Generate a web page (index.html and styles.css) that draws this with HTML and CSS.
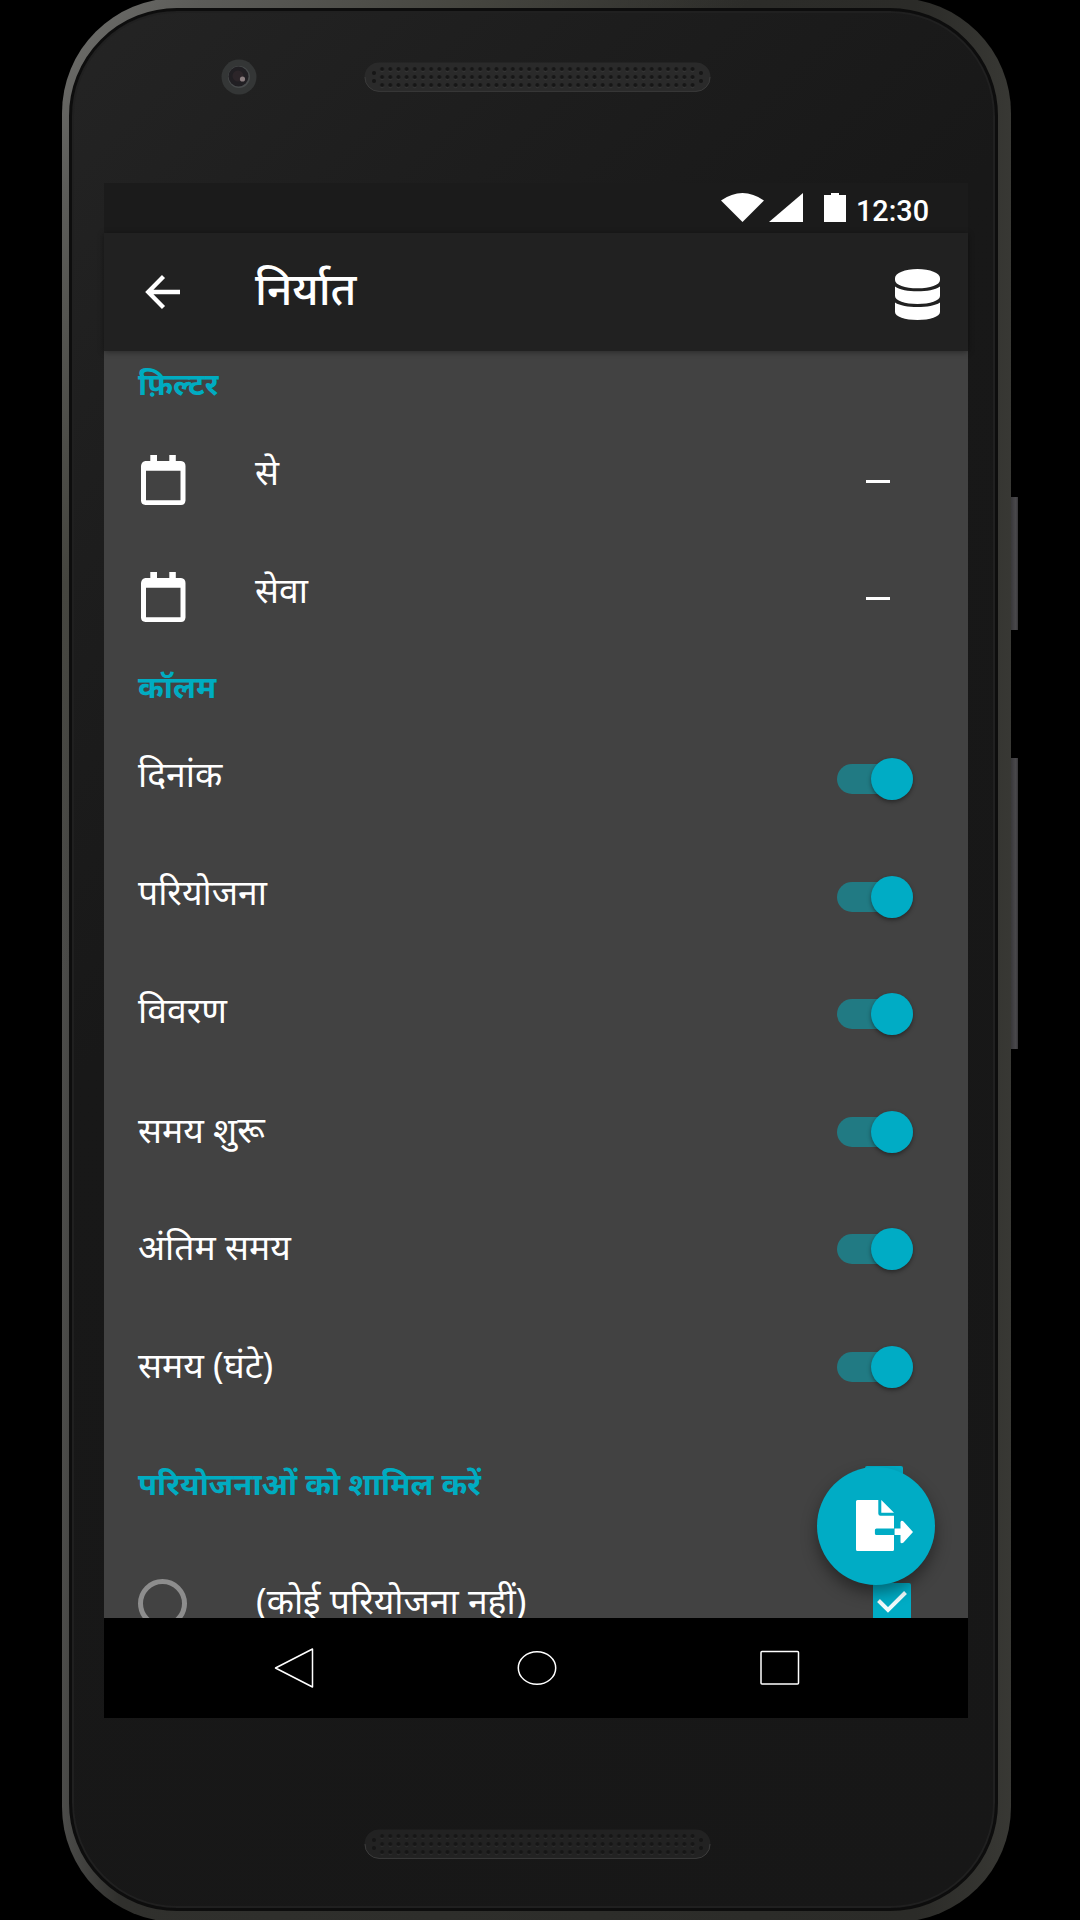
FILE: index.html
```html
<!DOCTYPE html>
<html lang="hi">
<head>
<meta charset="utf-8">
<title>निर्यात</title>
<link rel="stylesheet" href="styles.css">
</head>
<body>
<div class="phone">
  <span class="side-button power"></span>
  <span class="side-button volume"></span>
  <div class="bezel">
    <div class="forehead">
      <svg class="camera" viewBox="0 0 36 36"><circle cx="18" cy="18" r="17.5" fill="#343636"/><circle cx="18" cy="18" r="11" fill="#484b4c"/><circle cx="17.5" cy="17.5" r="10" fill="#211f23"/><circle cx="17" cy="17" r="5.5" fill="#2c2529"/><circle cx="21.5" cy="20" r="2.6" fill="#8b7e80"/></svg>
      <svg class="speaker" viewBox="0 0 347 30">
        <defs><pattern id="holes" x="14" y="3" width="8.17" height="8" patternUnits="userSpaceOnUse"><circle cx="4.1" cy="4" r="2" fill="#161616"/><path d="M2.6 6.2q1.5.8 3 0" stroke="#383838" fill="none" stroke-width=".8"/></pattern></defs>
        <rect x=".5" y=".5" width="346" height="29" rx="14.5" fill="#2a2a2a"/>
        <path d="M1 15A14 14 0 0 0 15 29.400H332A14 14 0 0 0 346 15" fill="none" stroke="#3a3a3a"/>
        <rect x="14" y="3" width="318.600" height="24" fill="url(#holes)"/>
        <g fill="#161616"><circle cx="10" cy="11" r="2"/><circle cx="10" cy="19" r="2"/><circle cx="337" cy="11" r="2"/><circle cx="337" cy="19" r="2"/></g>
      </svg>
    </div>
    <main class="screen">
      <div class="status">
        <svg class="wifi" viewBox="0 0 43 29"><path d="M0 7.500Q21.500-7.500 43 7.500L21.500 29z" fill="#fff"/></svg>
        <svg class="signal" viewBox="0 0 34 29"><path d="M0 29L34 0V29z" fill="#fff"/></svg>
        <svg class="battery" viewBox="0 0 22 29"><path d="M0 2H7V0H15V2H22V29H0z" fill="#fff"/></svg>
        <span class="clock">12:30</span>
      </div>
      <header class="appbar">
        <svg class="back" viewBox="0 0 34 34"><path d="M34 17H3M17.500 1.500L2.200 17L17.500 32.500" fill="none" stroke="#fff" stroke-width="4.300"/></svg>
        <h1 class="title">निर्यात</h1>
        <svg class="database" viewBox="0 0 45 51" fill="#fff"><path d="M0 9C0 4 10 0 22.500 0S45 4 45 9V11C45 16 35 19.300 22.500 19.300S0 16 0 11z"/><path d="M0 17.500C5 21 13 22.300 22.500 22.300S40 21 45 17.500V27C45 31.500 35 35 22.500 35S0 31.500 0 27z"/><path d="M0 33.500C5 36.800 13 38 22.500 38S40 36.800 45 33.500V43C45 47.500 35 51 22.500 51S0 47.500 0 43z"/></svg>
      </header>
      <section class="content">
        <h2 class="heading first"><span class="text">फ़िल्टर</span></h2>
        <div class="row filter">
          <svg class="calendar" viewBox="0 0 44.500 50"><path fill="#fff" fill-rule="evenodd" d="M4.500 6H9.300V0H16V6H28.300V0H34.800V6H40Q44.500 6.500 44.500 11V45.500Q44 50 40 50H4.500Q0 49.500 0 45.500V11Q.5 6.500 4.500 6zM5 15.700V45.300H39.500V15.700z"/></svg>
          <span class="text">से</span><span class="dash"></span>
        </div>
        <div class="row filter">
          <svg class="calendar" viewBox="0 0 44.500 50"><path fill="#fff" fill-rule="evenodd" d="M4.500 6H9.300V0H16V6H28.300V0H34.800V6H40Q44.500 6.500 44.500 11V45.500Q44 50 40 50H4.500Q0 49.500 0 45.500V11Q.5 6.500 4.500 6zM5 15.700V45.300H39.500V15.700z"/></svg>
          <span class="text">सेवा</span><span class="dash"></span>
        </div>
        <h2 class="heading second"><span class="text">कॉलम</span></h2>
        <div class="row"><span class="text">दिनांक</span><span class="switch"></span></div>
        <div class="row"><span class="text">परियोजना</span><span class="switch"></span></div>
        <div class="row"><span class="text">विवरण</span><span class="switch"></span></div>
        <div class="row low"><span class="text">समय शुरू</span><span class="switch"></span></div>
        <div class="row low"><span class="text">अंतिम समय</span><span class="switch"></span></div>
        <div class="row low"><span class="text">समय (घंटे)</span><span class="switch"></span></div>
        <div class="heading projects"><h2 class="text">परियोजनाओं को शामिल करें</h2><span class="checkbox"></span></div>
        <div class="row project"><span class="radio"></span><span class="text">(कोई परियोजना नहीं)</span>
          <span class="checkbox"><svg class="tick" viewBox="0 0 38 38"><path d="M5.500 17.500L15 27L32.500 9.500" fill="none" stroke="#f2fbfc" stroke-width="4"/></svg></span>
        </div>
        <button class="fab" aria-label="निर्यात">
          <svg class="export" viewBox="0 0 57 51" fill="#fff"><path fill-rule="evenodd" d="M1.500 0H22.300V13.500Q22.300 15.700 24.500 15.700H38V28.500H20.500Q18.900 28.500 18.900 30V33.500Q18.900 35 20.500 35H38V49.500Q38 51 36.500 51H1.500Q0 51 0 49.500V1.500Q0 0 1.500 0z"/><path d="M25.300 0L38 12.800H25.300zM38.600 28.500H44.500V22Q45.500 20 47.500 21.500L57 32L47.500 42.500Q45.500 44 44.500 42.500V35H38.600z"/></svg>
        </button>
      </section>
      <nav class="navbar">
        <svg class="nav-back" viewBox="0 0 40 40"><path d="M1.500 20L38.500 1V39z" fill="none" stroke="#fff" stroke-width="1.500" stroke-linejoin="round"/></svg>
        <svg class="nav-home" viewBox="0 0 40 36"><ellipse cx="20" cy="18" rx="18.700" ry="16.300" fill="none" stroke="#fff" stroke-width="1.500"/></svg>
        <svg class="nav-recent" viewBox="0 0 40 36"><rect x="1" y="1.500" width="37.500" height="32.500" rx="1" fill="none" stroke="#fff" stroke-width="1.500"/></svg>
      </nav>
    </main>
    <div class="chin">
      <svg class="speaker dim" viewBox="0 0 347 30">
        <rect x=".5" y=".5" width="346" height="29" rx="14.500" fill="#262626"/>
        <path d="M1 15A14 14 0 0 0 15 29.400H332A14 14 0 0 0 346 15" fill="none" stroke="#484848"/>
        <rect x="14" y="3" width="318.600" height="24" fill="url(#holes)"/>
        <g fill="#161616"><circle cx="10" cy="11" r="2"/><circle cx="10" cy="19" r="2"/><circle cx="337" cy="11" r="2"/><circle cx="337" cy="19" r="2"/></g>
      </svg>
    </div>
  </div>
</div>
</body>
</html>
```
FILE: styles.css
```css
* { box-sizing: border-box; }
body { margin: 0; width: 1080px; height: 1920px; overflow: hidden; background: #000; font-family: "Noto Sans", "Noto Sans Devanagari", sans-serif; color: #fff; }
svg { display: block; flex: none; overflow: visible; }
h1, h2 { margin: 0; font-weight: inherit; font-size: inherit; }

.phone { position: relative; width: 949px; height: 1924px; margin: -2px 0 0 62px; padding: 10px 13px 11px 7px; border-radius: 115px; background: linear-gradient(125deg, #70706d 0, #5c5c59 6%, #45453f 18%, transparent 30%), linear-gradient(90deg, #4c4c4a, #30302d 6%, #2b2b28 90%, #383834); }
.side-button { position: absolute; left: 949px; width: 7px; background: linear-gradient(90deg, #39383b, #4a494c 70%, #353437); }
.power { top: 499px; height: 133px; }
.volume { top: 760px; height: 291px; }
.bezel { display: flex; flex-direction: column; height: 1903px; border: 3px solid #0d0d0d; border-radius: 108px; padding: 0 27px 0 32px; background: linear-gradient(135deg, #242424, #1d1d1d 20%, #181818 38%, #171717); box-shadow: inset 0 0 0 2px #202020; }
.forehead { display: flex; align-items: flex-start; height: 172px; padding-left: 117px; }
.camera { width: 36px; height: 36px; margin-top: 48px; }
.speaker { width: 347px; height: 30px; margin: 51px 0 0 107px; }
.chin { display: flex; justify-content: center; padding: 111px 0 0 2px; }
.dim { margin: 0; opacity: .75; }

.screen { display: flex; flex-direction: column; width: 864px; height: 1535px; flex: none; background: #424242; }
.status { display: flex; align-items: flex-start; height: 50px; padding: 10px 0 0 617px; background: #1b1b1b; }
.wifi { width: 43px; height: 29px; }
.signal { width: 34px; height: 29px; margin-left: 5px; }
.battery { width: 22px; height: 29px; margin-left: 21px; }
.clock { margin: 1px 0 0 10px; font: 500 28.800px/34px Roboto, sans-serif; }
.appbar { display: flex; align-items: center; height: 118px; padding: 0 28px 0 42px; background: #212121; box-shadow: 0 1px 6px rgba(0,0,0,.4); z-index: 1; }
.back { width: 34px; height: 34px; }
.title { flex: 1; margin-left: 75px; font-size: 44.300px; line-height: 60px; font-weight: 500; padding-bottom: 9px; white-space: nowrap; }
.database { width: 45px; height: 51px; margin-top: 4px; }

.content { position: relative; height: 1267px; overflow: hidden; }
.heading { display: flex; align-items: center; padding: 0 65px 0 34px; font-size: 31.100px; line-height: 40px; font-weight: 700; color: #00acc1; }
.text { flex: 1; white-space: nowrap; }
.first { height: 70px; padding-bottom: 6px; }
.second { height: 64px; padding-bottom: 4px; }
.projects { height: 119px; }
.projects > .text { padding-bottom: 5px; }
.row { display: flex; align-items: center; height: 117.600px; padding: 0 55px 0 34px; font-size: 35.500px; line-height: 48px; }
.row > .text { padding-bottom: 11px; }
.low > .text { padding-bottom: 6px; }
.calendar { width: 44.500px; height: 50px; margin: 0 70px 0 2.500px; }
.filter { padding-right: 78px; }
.filter > .text { padding-bottom: 17px; }
.dash { width: 24px; height: 3px; margin-top: 3px; background: #fff; }
.switch { display: flex; align-items: center; justify-content: flex-end; width: 76px; height: 30px; border-radius: 15px; background: #217a83; }
.switch::before { content: ""; flex: none; width: 42px; height: 42px; border-radius: 50%; background: #00acc5; box-shadow: 0 2px 4px rgba(0,0,0,.4); }
.checkbox { width: 38px; height: 38px; border-radius: 2px; background: #00acc5; }
.tick { width: 38px; height: 38px; }
.project { padding-right: 57px; }
.project > .text { padding-bottom: 8px; }
.project > .checkbox { margin-bottom: 3px; }
.radio { width: 49px; height: 49px; margin-right: 69px; border: 5px solid #8d8d8d; border-radius: 50%; }
.fab { position: absolute; left: 713px; top: 1115.500px; width: 118px; height: 118px; padding: 0 0 0 39px; border: 0; border-radius: 50%; background: #00acc5; box-shadow: 0 8px 16px rgba(0,0,0,.4); }
.export { width: 57px; height: 51px; }

.navbar { display: flex; align-items: center; height: 100px; padding: 0 168px 0 170px; justify-content: space-between; background: #000; }
.nav-back { width: 40px; height: 40px; }
.nav-home, .nav-recent { width: 40px; height: 36px; }
```
